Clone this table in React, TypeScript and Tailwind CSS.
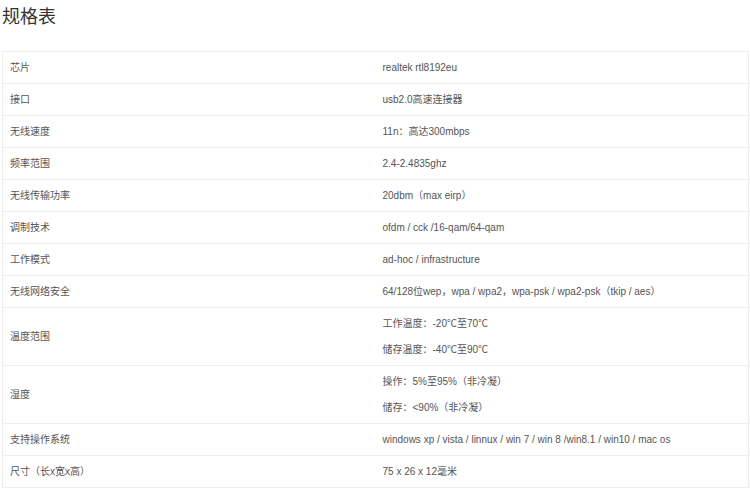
const specs: { label: string; values: string[] }[] = [
  { label: '芯片', values: ['realtek rtl8192eu'] },
  { label: '接口', values: ['usb2.0高速连接器'] },
  { label: '无线速度', values: ['11n：高达300mbps'] },
  { label: '频率范围', values: ['2.4-2.4835ghz'] },
  { label: '无线传输功率', values: ['20dbm（max eirp）'] },
  { label: '调制技术', values: ['ofdm / cck /16-qam/64-qam'] },
  { label: '工作模式', values: ['ad-hoc / infrastructure'] },
  { label: '无线网络安全', values: ['64/128位wep，wpa / wpa2，wpa-psk / wpa2-psk（tkip / aes）'] },
  { label: '温度范围', values: ['工作温度：-20℃至70℃', '储存温度：-40℃至90℃'] },
  { label: '湿度', values: ['操作：5%至95%（非冷凝）', '储存：<90%（非冷凝）'] },
  { label: '支持操作系统', values: ['windows xp / vista / linnux / win 7 / win 8 /win8.1 / win10 / mac os'] },
  { label: '尺寸（长x宽x高）', values: ['75 x 26 x 12毫米'] },
];

export default function App() {
  return (
    <div className="w-[750px] h-[489px] bg-white overflow-hidden font-['Liberation_Sans','Noto_Sans_CJK_SC',sans-serif]">
      <h1 className="pl-[2px] pt-[4px] h-[51px] text-[18px] leading-[27px] font-normal text-[#333]">规格表</h1>
      <table className="ml-[2px] w-[747px] border-collapse table-fixed text-[10px] leading-[15px] text-[#555]">
        <tbody>
          {specs.map((row) => (
            <tr key={row.label} className="border border-[#eeeeee]">
              <td className="w-1/2 px-[7px] py-[8px] align-middle">{row.label}</td>
              <td className="w-1/2 px-[7px] py-[8px] align-middle">
                <div className="flex flex-col gap-[11px]">
                  {row.values.map((v) => (
                    <p key={v}>{v}</p>
                  ))}
                </div>
              </td>
            </tr>
          ))}
        </tbody>
      </table>
    </div>
  );
}
